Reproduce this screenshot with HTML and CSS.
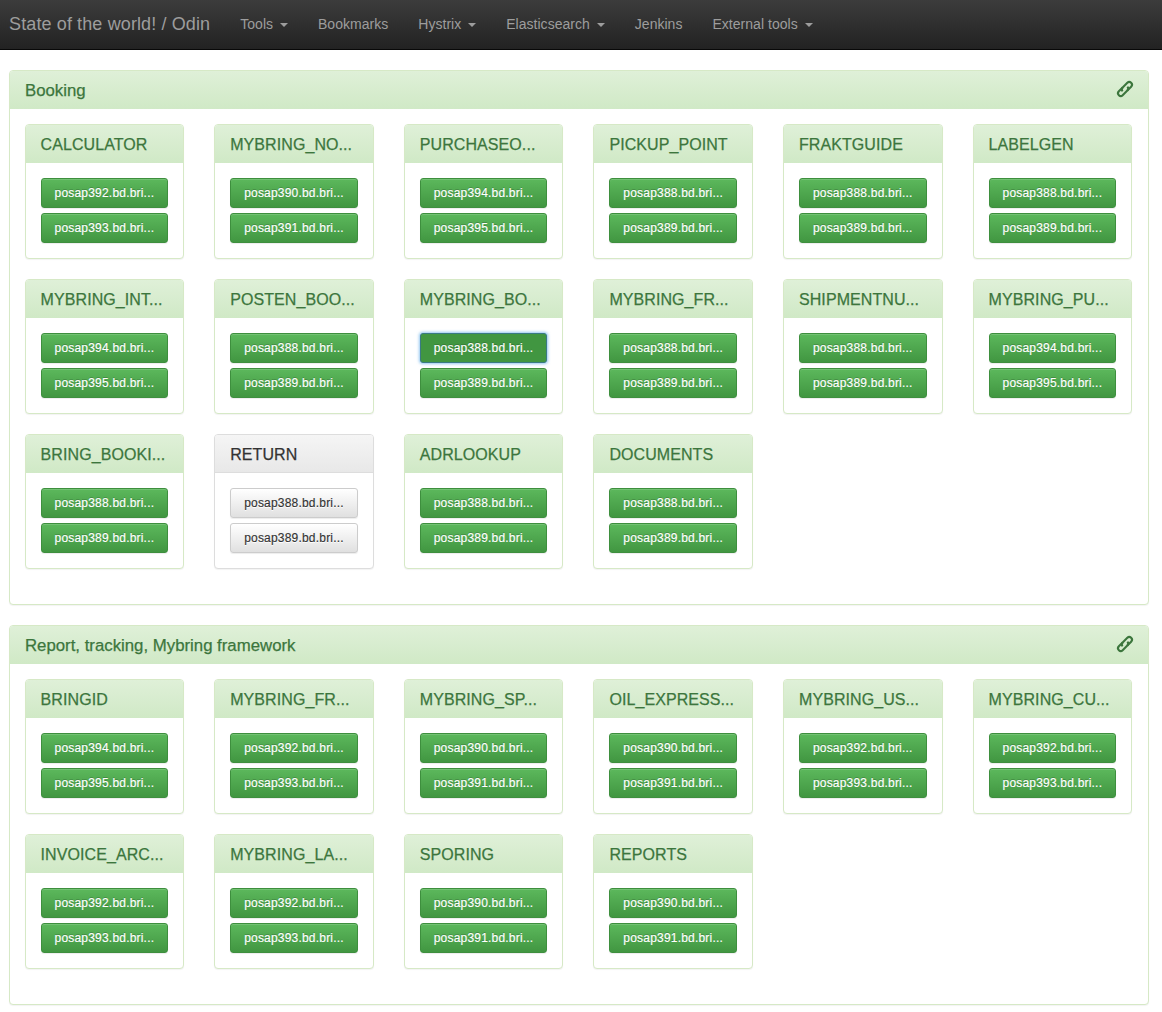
FILE: index.html
```html
<!DOCTYPE html>
<html lang="en">
<head>
    <meta charset="UTF-8">
    <title>State of the world! / Odin</title>
    <link rel="stylesheet" href="styles.css">
</head>
<body>
    <nav class="navbar">
        <a class="brand">State of the world! / Odin</a>
        <ul class="nav">
            <li>Tools <b class="caret"></b></li>
            <li>Bookmarks</li>
            <li>Hystrix <b class="caret"></b></li>
            <li>Elasticsearch <b class="caret"></b></li>
            <li>Jenkins</li>
            <li>External tools <b class="caret"></b></li>
        </ul>
    </nav>

    <div class="container">
        <section class="panel">
            <div class="panel-heading">
                <span>Booking</span>
                <svg class="link-icon" viewBox="0 0 16 16"><g fill="none" stroke="#3c763d" stroke-width="2.1" transform="rotate(-45 8 8)"><path d="M7.4 5.3H2a2.7 2.7 0 0 0 0 5.4H8.6a2.7 2.7 0 0 0 2.7-2.7"/><path d="M8.6 10.7H14a2.7 2.7 0 0 0 0-5.4H7.4a2.7 2.7 0 0 0-2.7 2.7"/></g></svg>
            </div>
            <div class="panel-body">
                <div class="grid">
                    <div class="app"><h3>CALCULATOR</h3><div class="hosts"><a class="btn">posap392.bd.bri...</a><a class="btn">posap393.bd.bri...</a></div></div>
                    <div class="app"><h3>MYBRING_NO...</h3><div class="hosts"><a class="btn">posap390.bd.bri...</a><a class="btn">posap391.bd.bri...</a></div></div>
                    <div class="app"><h3>PURCHASEO...</h3><div class="hosts"><a class="btn">posap394.bd.bri...</a><a class="btn">posap395.bd.bri...</a></div></div>
                    <div class="app"><h3>PICKUP_POINT</h3><div class="hosts"><a class="btn">posap388.bd.bri...</a><a class="btn">posap389.bd.bri...</a></div></div>
                    <div class="app"><h3>FRAKTGUIDE</h3><div class="hosts"><a class="btn">posap388.bd.bri...</a><a class="btn">posap389.bd.bri...</a></div></div>
                    <div class="app"><h3>LABELGEN</h3><div class="hosts"><a class="btn">posap388.bd.bri...</a><a class="btn">posap389.bd.bri...</a></div></div>
                    <div class="app"><h3>MYBRING_INT...</h3><div class="hosts"><a class="btn">posap394.bd.bri...</a><a class="btn">posap395.bd.bri...</a></div></div>
                    <div class="app"><h3>POSTEN_BOO...</h3><div class="hosts"><a class="btn">posap388.bd.bri...</a><a class="btn">posap389.bd.bri...</a></div></div>
                    <div class="app"><h3>MYBRING_BO...</h3><div class="hosts"><a class="btn focus">posap388.bd.bri...</a><a class="btn">posap389.bd.bri...</a></div></div>
                    <div class="app"><h3>MYBRING_FR...</h3><div class="hosts"><a class="btn">posap388.bd.bri...</a><a class="btn">posap389.bd.bri...</a></div></div>
                    <div class="app"><h3>SHIPMENTNU...</h3><div class="hosts"><a class="btn">posap388.bd.bri...</a><a class="btn">posap389.bd.bri...</a></div></div>
                    <div class="app"><h3>MYBRING_PU...</h3><div class="hosts"><a class="btn">posap394.bd.bri...</a><a class="btn">posap395.bd.bri...</a></div></div>
                    <div class="app"><h3>BRING_BOOKI...</h3><div class="hosts"><a class="btn">posap388.bd.bri...</a><a class="btn">posap389.bd.bri...</a></div></div>
                    <div class="app off"><h3>RETURN</h3><div class="hosts"><a class="btn">posap388.bd.bri...</a><a class="btn">posap389.bd.bri...</a></div></div>
                    <div class="app"><h3>ADRLOOKUP</h3><div class="hosts"><a class="btn">posap388.bd.bri...</a><a class="btn">posap389.bd.bri...</a></div></div>
                    <div class="app"><h3>DOCUMENTS</h3><div class="hosts"><a class="btn">posap388.bd.bri...</a><a class="btn">posap389.bd.bri...</a></div></div>
                </div>
            </div>
        </section>

        <section class="panel">
            <div class="panel-heading">
                <span>Report, tracking, Mybring framework</span>
                <svg class="link-icon" viewBox="0 0 16 16"><g fill="none" stroke="#3c763d" stroke-width="2.1" transform="rotate(-45 8 8)"><path d="M7.4 5.3H2a2.7 2.7 0 0 0 0 5.4H8.6a2.7 2.7 0 0 0 2.7-2.7"/><path d="M8.6 10.7H14a2.7 2.7 0 0 0 0-5.4H7.4a2.7 2.7 0 0 0-2.7 2.7"/></g></svg>
            </div>
            <div class="panel-body">
                <div class="grid">
                    <div class="app"><h3>BRINGID</h3><div class="hosts"><a class="btn">posap394.bd.bri...</a><a class="btn">posap395.bd.bri...</a></div></div>
                    <div class="app"><h3>MYBRING_FR...</h3><div class="hosts"><a class="btn">posap392.bd.bri...</a><a class="btn">posap393.bd.bri...</a></div></div>
                    <div class="app"><h3>MYBRING_SP...</h3><div class="hosts"><a class="btn">posap390.bd.bri...</a><a class="btn">posap391.bd.bri...</a></div></div>
                    <div class="app"><h3>OIL_EXPRESS...</h3><div class="hosts"><a class="btn">posap390.bd.bri...</a><a class="btn">posap391.bd.bri...</a></div></div>
                    <div class="app"><h3>MYBRING_US...</h3><div class="hosts"><a class="btn">posap392.bd.bri...</a><a class="btn">posap393.bd.bri...</a></div></div>
                    <div class="app"><h3>MYBRING_CU...</h3><div class="hosts"><a class="btn">posap392.bd.bri...</a><a class="btn">posap393.bd.bri...</a></div></div>
                    <div class="app"><h3>INVOICE_ARC...</h3><div class="hosts"><a class="btn">posap392.bd.bri...</a><a class="btn">posap393.bd.bri...</a></div></div>
                    <div class="app"><h3>MYBRING_LA...</h3><div class="hosts"><a class="btn">posap392.bd.bri...</a><a class="btn">posap393.bd.bri...</a></div></div>
                    <div class="app"><h3>SPORING</h3><div class="hosts"><a class="btn">posap390.bd.bri...</a><a class="btn">posap391.bd.bri...</a></div></div>
                    <div class="app"><h3>REPORTS</h3><div class="hosts"><a class="btn">posap390.bd.bri...</a><a class="btn">posap391.bd.bri...</a></div></div>
                </div>
            </div>
        </section>
    </div>
</body>
</html>
```

FILE: styles.css
```css
* {
    box-sizing: border-box;
}
body {
    margin: 0;
    font-family: "Liberation Sans", Arial, sans-serif;
    font-size: 14px;
    line-height: 20px;
    color: #333;
    background: #fff;
}

.navbar {
    display: flex;
    height: 50px;
    padding-left: 9px;
    background: linear-gradient(to bottom, #3c3c3c, #222);
    border-bottom: 1px solid #080808;
    color: #9d9d9d;
}
.brand {
    font-size: 18px;
    line-height: 48px;
    letter-spacing: 0.12px;
    color: #9d9d9d;
}
.nav {
    display: flex;
    gap: 30px;
    margin: 0 0 0 30px;
    padding: 0;
    list-style: none;
    line-height: 48px;
    letter-spacing: 0.03px;
}
.caret {
    display: inline-block;
    width: 0;
    height: 0;
    margin-left: 3px;
    vertical-align: middle;
    border-top: 4px solid #9d9d9d;
    border-left: 4px solid transparent;
    border-right: 4px solid transparent;
}

.container {
    width: 1140px;
    margin: 20px 0 0 9px;
}
.panel {
    margin-bottom: 20px;
    background: #fff;
    border: 1px solid #d6e9c6;
    border-radius: 4px;
    box-shadow: 0 1px 1px rgba(0, 0, 0, 0.05);
}
.panel-heading {
    display: flex;
    justify-content: space-between;
    align-items: center;
    height: 38px;
    padding: 1px 15px 0;
    font-size: 16.8px;
    -webkit-text-stroke: 0.25px currentColor;
    color: #3c763d;
    background: linear-gradient(to bottom, #dff0d8, #d0e9c6);
    border-radius: 3px 3px 0 0;
}
.link-icon {
    width: 16px;
    height: 16px;
    margin-bottom: 3px;
    overflow: visible;
}
.panel-body {
    padding: 15px 15px 15px 14.6px;
}
.grid {
    display: grid;
    grid-template-columns: repeat(6, 159.6px);
    gap: 20px 30px;
    margin-bottom: 20px;
}
.app {
    height: 135px;
    background: #fff;
    border: 1px solid #d6e9c6;
    border-radius: 4px;
    box-shadow: 0 1px 1px rgba(0, 0, 0, 0.05);
}
.app h3 {
    height: 38px;
    margin: 0;
    padding: 1px 15px 0;
    font-size: 16px;
    font-weight: normal;
    line-height: 38px;
    letter-spacing: 0.08px;
    white-space: nowrap;
    overflow: hidden;
    -webkit-text-stroke: 0.25px currentColor;
    color: #3c763d;
    background: linear-gradient(to bottom, #dff0d8, #d0e9c6);
    border-radius: 3px 3px 0 0;
}
.hosts {
    display: flex;
    flex-direction: column;
    gap: 5px;
    padding: 15px;
}
.btn {
    height: 30px;
    padding: 0 12px;
    font-size: 12px;
    line-height: 28px;
    letter-spacing: 0.2px;
    text-align: center;
    white-space: nowrap;
    overflow: hidden;
    -webkit-text-stroke: 0.15px currentColor;
    color: #fff;
    text-shadow: 0 -1px 0 rgba(0, 0, 0, 0.2);
    background: linear-gradient(to bottom, #5cb85c, #419641);
    border: 1px solid #3e8f3e;
    border-radius: 3px;
    box-shadow: inset 0 1px 0 rgba(255, 255, 255, 0.15), 0 1px 1px rgba(0, 0, 0, 0.075);
}
.btn.focus {
    background: #419641;
    border-color: #3a7a84;
    box-shadow: 0 0 3px 1px rgba(102, 175, 233, 0.7);
}

.app.off {
    border-color: #ddd;
}
.app.off h3 {
    color: #333;
    background: linear-gradient(to bottom, #f5f5f5, #e8e8e8);
    border-bottom: 1px solid #ddd;
}
.app.off .btn {
    color: #333;
    text-shadow: 0 1px 0 #fff;
    background: linear-gradient(to bottom, #fff, #e0e0e0);
    border-color: #ccc;
}
```
